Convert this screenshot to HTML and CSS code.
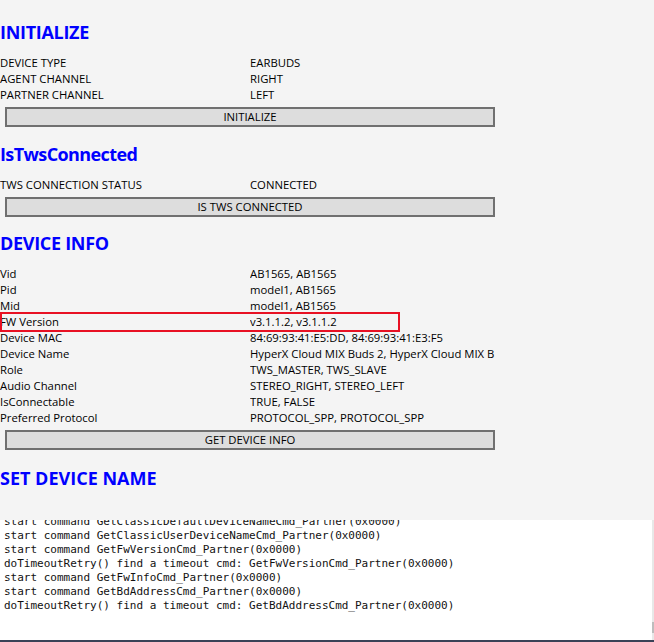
FILE: index.html
```html
<!DOCTYPE html>
<html>
<head>
<meta charset="utf-8">
<link rel="stylesheet" href="styles.css">
</head>
<body>
<div class="page">
  <section class="sec sec-init">
    <h2 class="title">INITIALIZE</h2>
    <div class="rows">
      <div class="row"><span class="k">DEVICE TYPE</span><span class="v">EARBUDS</span></div>
      <div class="row"><span class="k">AGENT CHANNEL</span><span class="v">RIGHT</span></div>
      <div class="row"><span class="k">PARTNER CHANNEL</span><span class="v">LEFT</span></div>
    </div>
    <button class="btn">INITIALIZE</button>
  </section>
  <section class="sec sec-tws">
    <h2 class="title">IsTwsConnected</h2>
    <div class="rows">
      <div class="row"><span class="k">TWS CONNECTION STATUS</span><span class="v">CONNECTED</span></div>
    </div>
    <button class="btn">IS TWS CONNECTED</button>
  </section>
  <section class="sec sec-info">
    <h2 class="title">DEVICE INFO</h2>
    <div class="rows">
      <div class="row"><span class="k">Vid</span><span class="v">AB1565, AB1565</span></div>
      <div class="row"><span class="k">Pid</span><span class="v">model1, AB1565</span></div>
      <div class="row"><span class="k">Mid</span><span class="v">model1, AB1565</span></div>
      <div class="row row-mark"><span class="k">FW Version</span><span class="v">v3.1.1.2, v3.1.1.2</span></div>
      <div class="row"><span class="k">Device MAC</span><span class="v">84:69:93:41:E5:DD, 84:69:93:41:E3:F5</span></div>
      <div class="row"><span class="k">Device Name</span><span class="v">HyperX Cloud MIX Buds 2, HyperX Cloud MIX B</span></div>
      <div class="row"><span class="k">Role</span><span class="v">TWS_MASTER, TWS_SLAVE</span></div>
      <div class="row"><span class="k">Audio Channel</span><span class="v">STEREO_RIGHT, STEREO_LEFT</span></div>
      <div class="row"><span class="k">IsConnectable</span><span class="v">TRUE, FALSE</span></div>
      <div class="row"><span class="k">Preferred Protocol</span><span class="v">PROTOCOL_SPP, PROTOCOL_SPP</span></div>
    </div>
    <button class="btn btn-info">GET DEVICE INFO</button>
  </section>
  <section class="sec sec-name">
    <h2 class="title">SET DEVICE NAME</h2>
  </section>
</div>
<div class="log">
  <div class="log-inner">
    <div class="log-line">start command GetClassicDefaultDeviceNameCmd_Partner(0x0000)</div>
    <div class="log-line">start command GetClassicUserDeviceNameCmd_Partner(0x0000)</div>
    <div class="log-line">start command GetFwVersionCmd_Partner(0x0000)</div>
    <div class="log-line">doTimeoutRetry() find a timeout cmd: GetFwVersionCmd_Partner(0x0000)</div>
    <div class="log-line">start command GetFwInfoCmd_Partner(0x0000)</div>
    <div class="log-line">start command GetBdAddressCmd_Partner(0x0000)</div>
    <div class="log-line">doTimeoutRetry() find a timeout cmd: GetBdAddressCmd_Partner(0x0000)</div>
  </div>
  <div class="scrollbar"><div class="thumb"></div></div>
</div>
</body>
</html>
```
FILE: styles.css
```css
html, body {
  margin: 0;
  padding: 0;
  background: #f4f4f4;
}
body {
  width: 654px;
  height: 642px;
  overflow: hidden;
  font-family: "Open Sans", "Noto Sans", sans-serif;
  font-size: 11.3px;
  color: #000;
}
.page {
  height: 520px;
  overflow: hidden;
}
.title {
  margin: 0;
  height: 25px;
  line-height: 25px;
  font-size: 18px;
  font-weight: 700;
  color: #0000ff;
  letter-spacing: -0.3px;
}
.sec-init .title { margin-top: 20px; margin-bottom: 10px; }
.sec-tws .title { margin-top: 15px; margin-bottom: 10px; letter-spacing: -0.6px; }
.sec-info .title { margin-top: 14px; margin-bottom: 10px; }
.sec-name .title { margin-top: 16px; letter-spacing: 0; }
.rows {
  display: flex;
  flex-direction: column;
}
.row {
  display: grid;
  grid-template-columns: 250px 250px;
  height: 16px;
  line-height: 16px;
  white-space: nowrap;
}
.row .k, .row .v {
  overflow: hidden;
}
.row-mark {
  position: relative;
}
.row-mark::after {
  content: "";
  position: absolute;
  left: 0;
  top: -2px;
  width: 400px;
  height: 20px;
  box-sizing: border-box;
  border: 2px solid #e81123;
}
.btn {
  display: block;
  margin: 4px 0 0 5px;
  width: 490px;
  height: 20px;
  box-sizing: border-box;
  padding: 0;
  border: 2px solid #707070;
  background: #dddddd;
  font-family: inherit;
  font-size: 11.3px;
  line-height: 16px;
  color: #000;
}
.btn-info { margin-top: 4px; }
.log {
  position: relative;
  height: 120px;
  background: #ffffff;
  border-bottom: 2px solid #3a4257;
  overflow: hidden;
}
.log-inner {
  margin-top: -5px;
  padding-left: 4px;
  font-family: "DejaVu Sans Mono", monospace;
  font-size: 11px;
  line-height: 14px;
  color: #111;
  white-space: nowrap;
}
.scrollbar {
  position: absolute;
  right: 0;
  top: 0;
  bottom: 0;
  width: 2px;
  background: #e8e8e8;
}
.thumb {
  position: absolute;
  left: 0;
  right: 0;
  top: 102px;
  height: 11px;
  background: #bdbdbd;
}
```
